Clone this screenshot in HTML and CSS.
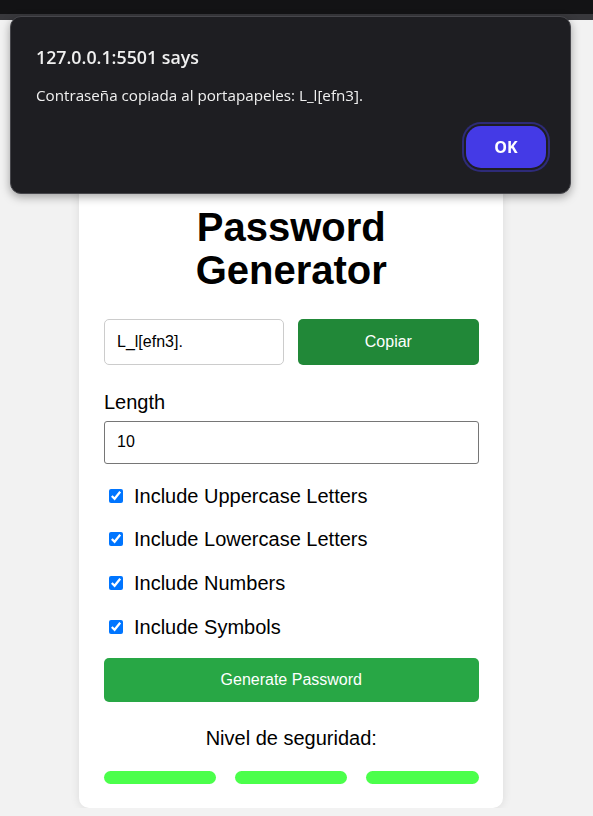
FILE: index.html
```html
<!DOCTYPE html>
<html lang="es">
<head>
<meta charset="utf-8">
<title>Password Generator</title>
<link rel="stylesheet" href="styles.css">
</head>
<body>
  <div class="chrome">
    <div class="chrome-top"></div>
    <div class="chrome-strip"></div>
  </div>
  <main class="page">
    <div class="card">
      <h1 class="title">Password Generator</h1>
      <div class="output-row">
        <input class="pw" type="text" value="L_l[efn3]." readonly>
        <button class="btn btn-copy" type="button">Copiar</button>
      </div>
      <label class="len-label" for="len">Length</label>
      <input id="len" class="len" type="text" value="10">
      <div class="options">
        <label class="opt"><input type="checkbox" checked>Include Uppercase Letters</label>
        <label class="opt"><input type="checkbox" checked>Include Lowercase Letters</label>
        <label class="opt"><input type="checkbox" checked>Include Numbers</label>
        <label class="opt"><input type="checkbox" checked>Include Symbols</label>
      </div>
      <button class="btn btn-generate" type="button">Generate Password</button>
      <p class="level">Nivel de seguridad:</p>
      <div class="bars">
        <span class="bar"></span>
        <span class="bar"></span>
        <span class="bar"></span>
      </div>
    </div>
  </main>
  <div class="dialog" role="alertdialog">
    <div class="dialog-title">127.0.0.1:5501 says</div>
    <div class="dialog-msg">Contraseña copiada al portapapeles: L_l[efn3].</div>
    <button class="dialog-ok" type="button">OK</button>
  </div>
</body>
</html>
```
FILE: styles.css
```css
html, body {
  margin: 0;
  padding: 0;
}
body {
  background: #f2f2f2;
  font-family: "Liberation Sans", Arial, sans-serif;
  font-size: 20px;
  color: #000;
}
.chrome-top {
  height: 14px;
  background: #131315;
}
.chrome-strip {
  height: 6px;
  background: #38383c;
}
.page {
  padding: 134.5px 0 0 79px;
}
.card {
  box-sizing: border-box;
  width: 424px;
  background: #fff;
  border-radius: 10px;
  box-shadow: 0 0 10px rgba(0, 0, 0, 0.1);
  padding: 25px 24.5px 24px 25px;
  display: flex;
  flex-direction: column;
}
.title {
  margin: 26.8px 0;
  font-size: 40px;
  line-height: 43px;
  font-weight: bold;
  text-align: center;
}
.output-row {
  display: grid;
  grid-template-columns: 1fr 1fr;
  gap: 14px;
  height: 46px;
  margin-bottom: 25.5px;
}
.pw {
  min-width: 0;
  box-sizing: border-box;
  border: 1px solid #ccc;
  border-radius: 5px;
  padding: 0 12px;
  font-family: "Liberation Sans", Arial, sans-serif;
  font-size: 16px;
  color: #000;
  outline: none;
}
.btn {
  border: none;
  border-radius: 5px;
  color: #fff;
  font-family: "Liberation Sans", Arial, sans-serif;
  font-size: 16px;
  padding: 0;
}
.btn-copy {
  background: #218838;
}
.len-label {
  display: block;
  line-height: 23px;
  margin-bottom: 7px;
}
.len {
  box-sizing: border-box;
  height: 43px;
  width: 100%;
  border: 1px solid #767676;
  border-radius: 3px;
  padding: 0 12px;
  font-family: "Liberation Sans", Arial, sans-serif;
  font-size: 16px;
  color: #000;
  margin: 0 0 21.2px;
}
.options {
  display: flex;
  flex-direction: column;
  gap: 20.6px;
}
.opt {
  display: block;
  line-height: 23px;
}
.opt input {
  width: 14px;
  height: 14px;
  margin: 3px 11px 1px 5px;
}
.btn-generate {
  margin-top: 19.3px;
  height: 44.5px;
  background: #28a745;
}
.level {
  margin: 25.1px 0 0;
  line-height: 23px;
  text-align: center;
}
.bars {
  margin-top: 20.4px;
  display: flex;
  justify-content: space-between;
}
.bar {
  width: 30%;
  height: 13px;
  border-radius: 7px;
  background: #4bff4b;
}
.dialog {
  position: fixed;
  left: 10px;
  top: 16px;
  width: 561px;
  height: 178px;
  box-sizing: border-box;
  background: #1e1e22;
  border: 1px solid #46464b;
  border-radius: 11px;
  box-shadow: 0 3px 10px rgba(0, 0, 0, 0.35);
  padding: 28px 24px 0 25px;
  display: flex;
  flex-direction: column;
  font-family: "Open Sans", "Noto Sans", sans-serif;
  color: #f0f0f0;
}
.dialog-title {
  font-size: 17.8px;
  font-weight: 600;
  line-height: 24px;
}
.dialog-msg {
  margin-top: 15.6px;
  font-size: 15.2px;
  line-height: 20px;
}
.dialog-ok {
  align-self: flex-end;
  margin-top: 21.4px;
  width: 80px;
  height: 42px;
  border: none;
  border-radius: 15px;
  background: #443ae6;
  color: #fff;
  font-family: "Open Sans", "Noto Sans", sans-serif;
  font-size: 16px;
  font-weight: 700;
  box-shadow: 0 0 0 2px #1e1e22, 0 0 0 4px #2e2b78;
}
```
